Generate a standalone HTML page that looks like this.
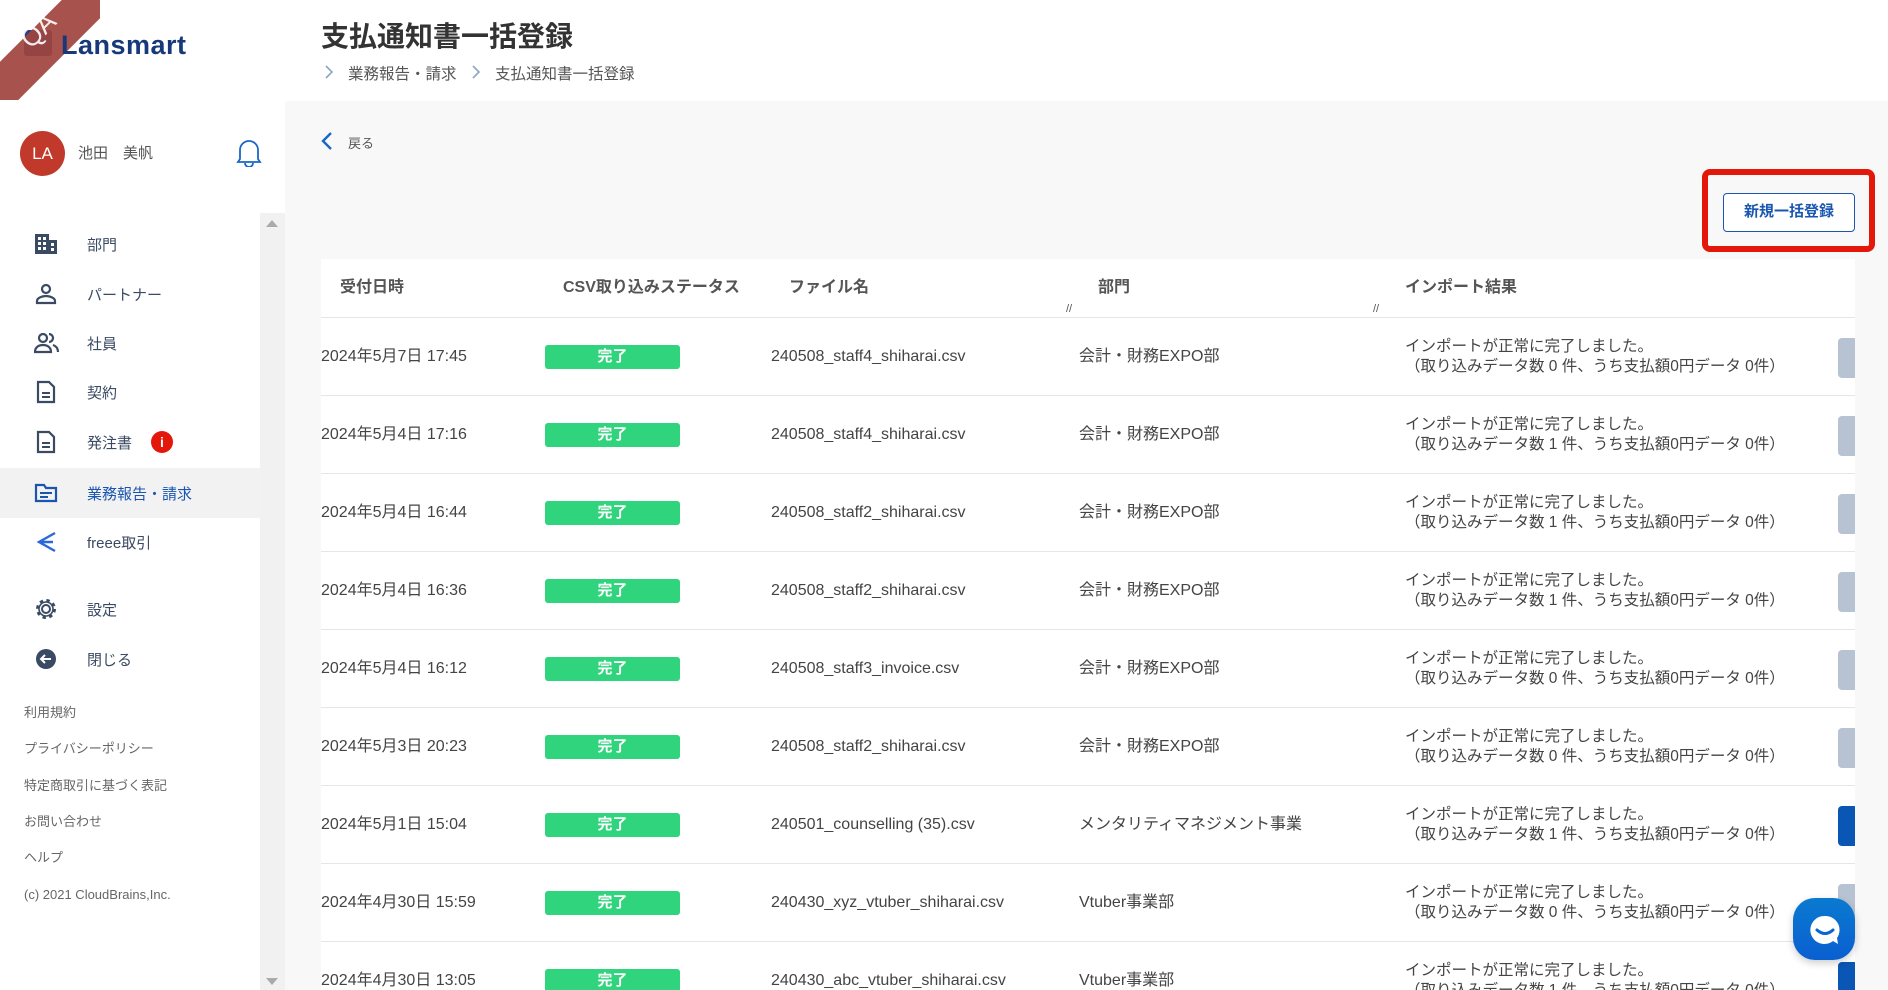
<!DOCTYPE html>
<html><head><meta charset="utf-8"><style>
*{margin:0;padding:0;box-sizing:border-box}
body{width:1888px;height:990px;overflow:hidden;background:#f8f8f8;font-family:"Liberation Sans","Noto Sans CJK JP",sans-serif;color:#444;position:relative}
.abs{position:absolute}
#side{left:0;top:0;width:285px;height:990px;background:#fff}
#sbar{left:260px;top:213px;width:25px;height:777px;background:#f1f1f1}
.nav{left:0;width:260px;height:50px;display:flex;align-items:center;font-size:15px;color:#3a4a63}
.nav svg{position:absolute;left:34px}
.nav span{position:absolute;left:87px}
.foot{left:24px;font-size:13px;color:#666}
#hdr{left:285px;top:0;width:1603px;height:101px;background:#fff}
#tbl{left:321px;top:259px;width:1534px;height:731px;background:#fff;overflow:hidden}
.th{top:0;height:58px;line-height:58px;font-size:16px;font-weight:bold;color:#555}
.row{left:0;width:1534px;height:78px;border-top:1px solid #e6e6e6}
.c{position:absolute;top:0;line-height:78px;font-size:16px;color:#444;white-space:nowrap}
.badge{position:absolute;left:224px;top:27px;width:135px;height:24px;background:#2fd47c;border-radius:3px;color:#fff;font-weight:bold;font-size:15px;text-align:center;line-height:24px}
.res{position:absolute;left:1084px;top:19px;font-size:15.5px;line-height:20px;color:#444;white-space:nowrap}
.stub{position:absolute;left:1517px;top:20px;width:20px;height:40px;border-radius:4px;background:#b7c3d3}
</style></head><body>
<div id="side" class="abs"></div>
<div class="abs" style="left:24px;top:30px;width:28px;height:26px;background:#27408a;border-radius:3px"></div>
<div class="abs" style="left:0;top:0;width:100px;height:100px;overflow:hidden"><div style="position:absolute;left:-60px;top:20px;width:220px;height:40px;background:#a0433d;transform:rotate(-45deg);opacity:.92"></div><div style="position:absolute;left:16px;top:12px;width:44px;height:36px;line-height:36px;text-align:center;color:#fff;font-size:26px;transform:rotate(-45deg);opacity:.9">QA</div></div>
<div class="abs" style="left:61px;top:30px;font-size:27px;font-weight:bold;color:#17397a;letter-spacing:.5px">Lansmart</div>
<div class="abs" style="left:20px;top:131px;width:45px;height:45px;border-radius:50%;background:#c0392b;color:#fff;font-size:17px;text-align:center;line-height:45px">LA</div>
<div class="abs" style="left:78px;top:142px;font-size:15px;color:#555">池田　美帆</div>
<svg class="abs" style="left:236px;top:137px" width="26" height="30" viewBox="0 0 26 30"><path d="M4 22V13a9 9 0 0 1 18 0v9l2 3H2z" fill="none" stroke="#1a66c4" stroke-width="1.8"/><path d="M9 26a4 4 0 0 0 8 0" fill="none" stroke="#1a66c4" stroke-width="1.8"/></svg>
<div id="sbar" class="abs"></div>
<div class="abs" style="left:266px;top:220px;border:6px solid transparent;border-bottom:7px solid #aaa;border-top:0"></div>
<div class="abs" style="left:266px;top:978px;border:6px solid transparent;border-top:7px solid #aaa;border-bottom:0"></div>
<div class="abs" style="left:0;top:468px;width:260px;height:50px;background:#f2f2f2"></div>
<div class="nav abs" style="top:219px"><svg width="24" height="22"><rect x="1" y="1" width="14" height="20" fill="#3a4a63"/><rect x="15" y="7" width="8" height="14" fill="#3a4a63"/><g fill="#fff"><rect x="4" y="4" width="3" height="3"/><rect x="9" y="4" width="3" height="3"/><rect x="4" y="9" width="3" height="3"/><rect x="9" y="9" width="3" height="3"/><rect x="4" y="14" width="3" height="3"/><rect x="9" y="14" width="3" height="3"/><rect x="17" y="10" width="3" height="3"/><rect x="17" y="15" width="3" height="3"/></g></svg><span>部門</span></div>
<div class="nav abs" style="top:269px"><svg width="24" height="22"><circle cx="12" cy="6" r="4" fill="none" stroke="#3a4a63" stroke-width="2.2"/><path d="M3 20v-2c0-3 5-5 9-5s9 2 9 5v2z" fill="none" stroke="#3a4a63" stroke-width="2.2"/></svg><span>パートナー</span></div>
<div class="nav abs" style="top:318px"><svg width="26" height="22"><circle cx="9" cy="6" r="4" fill="none" stroke="#3a4a63" stroke-width="2.2"/><path d="M1 20c0-5 4-7 8-7s8 2 8 7z" fill="none" stroke="#3a4a63" stroke-width="2.2"/><path d="M15 2a4 4 0 0 1 0 8M19 13c3 1 5 3 5 7" fill="none" stroke="#3a4a63" stroke-width="2.2"/></svg><span>社員</span></div>
<div class="nav abs" style="top:367px"><svg width="24" height="24"><path d="M4 2h11l5 5v15H4z" fill="none" stroke="#3a4a63" stroke-width="2.2"/><path d="M8 13h8M8 17h8" stroke="#3a4a63" stroke-width="2"/></svg><span>契約</span></div>
<div class="nav abs" style="top:417px"><svg width="24" height="24"><path d="M4 2h11l5 5v15H4z" fill="none" stroke="#3a4a63" stroke-width="2.2"/><path d="M8 13h8M8 17h8" stroke="#3a4a63" stroke-width="2"/></svg><span>発注書</span><div style="position:absolute;left:151px;width:22px;height:22px;border-radius:50%;background:#e3170a;color:#fff;font-weight:bold;font-size:14px;text-align:center;line-height:22px">i</div></div>
<div class="nav abs" style="top:468px;color:#1a56b0"><svg width="24" height="22"><path d="M2 3h8l2 3h10v13H2z" fill="none" stroke="#1a56b0" stroke-width="2.2"/><path d="M6 11h12M6 15h8" stroke="#1a56b0" stroke-width="2"/></svg><span>業務報告・請求</span></div>
<div class="nav abs" style="top:517px"><svg width="24" height="24"><path d="M21 3L5 12l16 9M5 12h14" fill="none" stroke="#2a6ad8" stroke-width="2.4"/></svg><span>freee取引</span></div>
<div class="nav abs" style="top:584px"><svg width="24" height="24"><circle cx="12" cy="12" r="4" fill="none" stroke="#3a4a63" stroke-width="2"/><circle cx="12" cy="12" r="8.5" fill="none" stroke="#3a4a63" stroke-width="3" stroke-dasharray="3.3 3.4"/><circle cx="12" cy="12" r="7" fill="none" stroke="#3a4a63" stroke-width="1.6"/></svg><span>設定</span></div>
<div class="nav abs" style="top:634px"><svg width="24" height="24"><circle cx="12" cy="12" r="10" fill="#3a4a63"/><path d="M17 12H7M11 8l-4 4 4 4" fill="none" stroke="#fff" stroke-width="2"/></svg><span>閉じる</span></div>
<div class="foot abs" style="top:702px">利用規約</div>
<div class="foot abs" style="top:738px">プライバシーポリシー</div>
<div class="foot abs" style="top:775px">特定商取引に基づく表記</div>
<div class="foot abs" style="top:811px">お問い合わせ</div>
<div class="foot abs" style="top:847px">ヘルプ</div>
<div class="foot abs" style="top:887px">(c) 2021 CloudBrains,Inc.</div>

<div id="hdr" class="abs"></div>
<div class="abs" style="left:321px;top:15px;font-size:28px;font-weight:bold;color:#333">支払通知書一括登録</div>
<svg class="abs" style="left:324px;top:65px" width="10" height="14"><path d="M2 1l6 6-6 6" fill="none" stroke="#8fa6c2" stroke-width="1.6"/></svg>
<div class="abs" style="left:348px;top:62px;font-size:15.5px;color:#555">業務報告・請求</div>
<svg class="abs" style="left:471px;top:65px" width="10" height="14"><path d="M2 1l6 6-6 6" fill="none" stroke="#8fa6c2" stroke-width="1.6"/></svg>
<div class="abs" style="left:495px;top:62px;font-size:15.5px;color:#555">支払通知書一括登録</div>
<svg class="abs" style="left:320px;top:131px" width="14" height="20"><path d="M11 2L3 10l8 8" fill="none" stroke="#1a66c4" stroke-width="2.4"/></svg>
<div class="abs" style="left:348px;top:133px;font-size:13px;color:#555">戻る</div>
<div class="abs" style="left:1702px;top:169px;width:173px;height:83px;border:6px solid #e3170a;border-radius:8px"></div>
<div class="abs" style="left:1723px;top:193px;width:132px;height:39px;border:1.5px solid #1a56b0;border-radius:4px;background:#fff;color:#1a56b0;font-weight:bold;font-size:15px;text-align:center;line-height:36px">新規一括登録</div>

<div id="tbl" class="abs">
<div class="th abs" style="left:19px">受付日時</div>
<div class="th abs" style="left:242px">CSV取り込みステータス</div>
<div class="th abs" style="left:468px">ファイル名</div>
<div class="th abs" style="left:777px">部門</div>
<div class="th abs" style="left:1084px">インポート結果</div>
<div class="abs" style="left:745px;top:44px;font-size:11px;color:#555">//</div>
<div class="abs" style="left:1052px;top:44px;font-size:11px;color:#555">//</div>
<div class="row abs" style="top:58px"><div class="c" style="left:0">2024年5月7日 17:45</div><div class="badge">完了</div><div class="c" style="left:450px">240508_staff4_shiharai.csv</div><div class="c" style="left:758px">会計・財務EXPO部</div><div class="res">インポートが正常に完了しました。<br>（取り込みデータ数 0 件、うち支払額0円データ 0件）</div><div class="stub"></div></div>
<div class="row abs" style="top:136px"><div class="c" style="left:0">2024年5月4日 17:16</div><div class="badge">完了</div><div class="c" style="left:450px">240508_staff4_shiharai.csv</div><div class="c" style="left:758px">会計・財務EXPO部</div><div class="res">インポートが正常に完了しました。<br>（取り込みデータ数 1 件、うち支払額0円データ 0件）</div><div class="stub"></div></div>
<div class="row abs" style="top:214px"><div class="c" style="left:0">2024年5月4日 16:44</div><div class="badge">完了</div><div class="c" style="left:450px">240508_staff2_shiharai.csv</div><div class="c" style="left:758px">会計・財務EXPO部</div><div class="res">インポートが正常に完了しました。<br>（取り込みデータ数 1 件、うち支払額0円データ 0件）</div><div class="stub"></div></div>
<div class="row abs" style="top:292px"><div class="c" style="left:0">2024年5月4日 16:36</div><div class="badge">完了</div><div class="c" style="left:450px">240508_staff2_shiharai.csv</div><div class="c" style="left:758px">会計・財務EXPO部</div><div class="res">インポートが正常に完了しました。<br>（取り込みデータ数 1 件、うち支払額0円データ 0件）</div><div class="stub"></div></div>
<div class="row abs" style="top:370px"><div class="c" style="left:0">2024年5月4日 16:12</div><div class="badge">完了</div><div class="c" style="left:450px">240508_staff3_invoice.csv</div><div class="c" style="left:758px">会計・財務EXPO部</div><div class="res">インポートが正常に完了しました。<br>（取り込みデータ数 0 件、うち支払額0円データ 0件）</div><div class="stub"></div></div>
<div class="row abs" style="top:448px"><div class="c" style="left:0">2024年5月3日 20:23</div><div class="badge">完了</div><div class="c" style="left:450px">240508_staff2_shiharai.csv</div><div class="c" style="left:758px">会計・財務EXPO部</div><div class="res">インポートが正常に完了しました。<br>（取り込みデータ数 0 件、うち支払額0円データ 0件）</div><div class="stub"></div></div>
<div class="row abs" style="top:526px"><div class="c" style="left:0">2024年5月1日 15:04</div><div class="badge">完了</div><div class="c" style="left:450px">240501_counselling (35).csv</div><div class="c" style="left:758px">メンタリティマネジメント事業</div><div class="res">インポートが正常に完了しました。<br>（取り込みデータ数 1 件、うち支払額0円データ 0件）</div><div class="stub" style="background:#0a56b4"></div></div>
<div class="row abs" style="top:604px"><div class="c" style="left:0">2024年4月30日 15:59</div><div class="badge">完了</div><div class="c" style="left:450px">240430_xyz_vtuber_shiharai.csv</div><div class="c" style="left:758px">Vtuber事業部</div><div class="res">インポートが正常に完了しました。<br>（取り込みデータ数 0 件、うち支払額0円データ 0件）</div><div class="stub"></div></div>
<div class="row abs" style="top:682px"><div class="c" style="left:0">2024年4月30日 13:05</div><div class="badge">完了</div><div class="c" style="left:450px">240430_abc_vtuber_shiharai.csv</div><div class="c" style="left:758px">Vtuber事業部</div><div class="res">インポートが正常に完了しました。<br>（取り込みデータ数 1 件、うち支払額0円データ 0件）</div><div class="stub" style="background:#0a56b4"></div></div>
</div>
<div class="abs" style="left:1793px;top:898px;width:62px;height:62px;border-radius:22px;background:linear-gradient(#0a7ad0,#0a5fd0);box-shadow:0 3px 8px rgba(0,0,0,.2)"></div>
<svg class="abs" style="left:1806px;top:911px" width="38" height="38" viewBox="0 0 38 38"><path d="M19 5a14 14 0 1 0 8 25l5 3-1-6A14 14 0 0 0 19 5z" fill="#fff"/><path d="M11 19q8 7 16 0" fill="none" stroke="#0a66d0" stroke-width="3" stroke-linecap="round"/></svg>
</body></html>
